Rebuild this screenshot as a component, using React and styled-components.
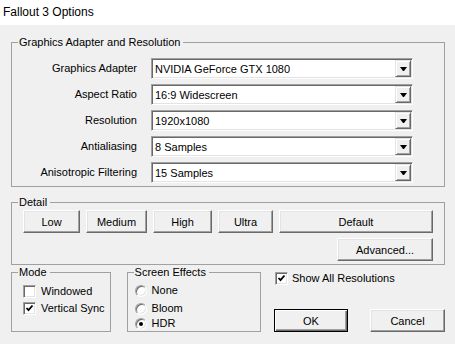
import React from "react";
import styled, { createGlobalStyle, css } from "styled-components";

const Global = createGlobalStyle`
  html, body { margin: 0; padding: 0; background: #f0f0f0; }
  body { font-family: "Liberation Sans", Arial, sans-serif; font-size: 11px; color: #000; }
  * { box-sizing: border-box; }
`;

const Window = styled.div`
  width: 455px;
  height: 344px;
  background: #f0f0f0;
  overflow: hidden;
`;

const TitleBar = styled.div`
  height: 25px;
  background: #fff;
  display: flex;
  align-items: center;
  padding-left: 3px;
  padding-bottom: 1px;
  font-size: 12px;
  color: #000;
`;

const Body = styled.div`
  padding: 17px 10px 0 11px;
`;

const Group = styled.div`
  position: relative;
  border: 1px solid #a0a0a0;
  width: ${(p) => p.$w}px;
  ${(p) => p.$h && css`height: ${p.$h}px;`}
  padding: ${(p) => p.$pad};
`;

const Legend = styled.span`
  position: absolute;
  top: -7px;
  left: 6px;
  padding: 0 3px 0 1px;
  line-height: 13px;
  background: #f0f0f0;
  white-space: nowrap;
`;

const FormGrid = styled.div`
  display: grid;
  grid-template-columns: 125px 262px;
  column-gap: 14px;
  row-gap: 5px;
  align-items: center;
`;

const Label = styled.div`
  text-align: right;
  line-height: 13px;
`;

const Combo = styled.div`
  height: 21px;
  display: flex;
  align-items: stretch;
  background: #fff;
  border: 1px solid;
  border-color: #a0a0a0 #fff #fff #a0a0a0;
  box-shadow: inset 1px 1px #696969, inset -1px -1px #e3e3e3;
  padding: 1px;
`;

const ComboValue = styled.div`
  flex: 1;
  display: flex;
  align-items: center;
  padding-left: 2px;
  white-space: nowrap;
`;

const DropButton = styled.div`
  width: 16px;
  display: flex;
  align-items: center;
  justify-content: center;
  background: #f0f0f0;
  border: 1px solid;
  border-color: #e3e3e3 #696969 #696969 #e3e3e3;
  box-shadow: inset 1px 1px #fff, inset -1px -1px #a0a0a0;
`;

const ButtonRow = styled.div`
  display: flex;
  gap: 6px;
  justify-content: ${(p) => (p.$end ? "flex-end" : "flex-start")};
  margin-top: ${(p) => p.$mt || 0}px;
`;

const Button = styled.button`
  width: ${(p) => p.$w}px;
  height: 23px;
  padding: 0;
  margin: 0;
  font-family: "Liberation Sans", Arial, sans-serif;
  font-size: 11px;
  color: #000;
  background: #f0f0f0;
  border: 1px solid;
  border-color: #fff #696969 #696969 #fff;
  box-shadow: inset -1px -1px #a0a0a0, inset 1px 1px #e3e3e3;
  ${(p) =>
    p.$default &&
    css`
      border-color: #000;
      box-shadow: inset 1px 1px #fff, inset -1px -1px #696969, inset -2px -2px #a0a0a0;
    `}
`;

const BottomRow = styled.div`
  display: flex;
  align-items: flex-start;
  margin-top: 7px;
`;

const OptionList = styled.div`
  display: flex;
  flex-direction: column;
`;

const OptionRow = styled.div`
  display: flex;
  align-items: center;
  height: 13px;
  margin-top: ${(p) => p.$mt || 0}px;
  margin-left: ${(p) => p.$ml || 0}px;
  gap: ${(p) => p.$gap || 5}px;
  white-space: nowrap;
  line-height: 13px;
`;

const CheckBox = styled.div`
  width: 13px;
  height: 13px;
  flex: none;
  display: flex;
  align-items: center;
  justify-content: center;
  background: #fff;
  border: 1px solid;
  border-color: #a0a0a0 #fff #fff #a0a0a0;
  box-shadow: inset 1px 1px #696969, inset -1px -1px #e3e3e3;
`;

const Radio = styled.div`
  width: 12px;
  height: 12px;
  flex: none;
  border-radius: 50%;
  display: flex;
  align-items: center;
  justify-content: center;
  background: #fff;
  border: 1px solid;
  border-color: #a0a0a0 #fff #fff #a0a0a0;
  box-shadow: inset 1px 1px #696969, inset -1px -1px #e3e3e3;
`;

const Dot = styled.div`
  width: 4px;
  height: 4px;
  border-radius: 50%;
  background: #000;
`;

const RightCol = styled.div`
  display: flex;
  flex-direction: column;
  margin-left: 13px;
`;

const Arrow = () => (
  <svg width="7" height="4" viewBox="0 0 7 4">
    <polygon points="0,0 7,0 4,4 3,4" fill="#000" />
  </svg>
);

const Check = () => (
  <svg width="9" height="9" viewBox="0 0 9 9">
    <path d="M1.5 4 L3.5 6.2 L7.5 1.5" stroke="#000" strokeWidth="1.8" fill="none" />
  </svg>
);

const rows = [
  ["Graphics Adapter", "NVIDIA GeForce GTX 1080"],
  ["Aspect Ratio", "16:9 Widescreen"],
  ["Resolution", "1920x1080"],
  ["Antialiasing", "8 Samples"],
  ["Anisotropic Filtering", "15 Samples"],
];

export default function App() {
  return (
    <Window>
      <Global />
      <TitleBar>Fallout 3 Options</TitleBar>
      <Body>
        <Group $w={434} $h={145} $pad="15px 0 3px 0">
          <Legend>Graphics Adapter and Resolution</Legend>
          <FormGrid>
            {rows.map(([label, value]) => (
              <React.Fragment key={label}>
                <Label>{label}</Label>
                <Combo>
                  <ComboValue>{value}</ComboValue>
                  <DropButton>
                    <Arrow />
                  </DropButton>
                </Combo>
              </React.Fragment>
            ))}
          </FormGrid>
        </Group>

        <Group $w={434} $h={63} $pad="7px 11px 3px 11px" style={{ marginTop: 15 }}>
          <Legend>Detail</Legend>
          <ButtonRow>
            <Button $w={57}>Low</Button>
            <Button $w={61}>Medium</Button>
            <Button $w={59}>High</Button>
            <Button $w={55}>Ultra</Button>
            <Button $w={154}>Default</Button>
          </ButtonRow>
          <ButtonRow $end $mt={5}>
            <Button $w={96}>Advanced...</Button>
          </ButtonRow>
        </Group>

        <BottomRow>
          <Group $w={100} $h={60} $pad="12px 0 0 11px">
            <Legend>Mode</Legend>
            <OptionList>
              <OptionRow>
                <CheckBox />
                Windowed
              </OptionRow>
              <OptionRow $mt={4}>
                <CheckBox>
                  <Check />
                </CheckBox>
                Vertical Sync
              </OptionRow>
            </OptionList>
          </Group>

          <Group $w={135} $h={60} $pad="11px 0 0 7px" style={{ marginLeft: 16 }}>
            <Legend>Screen Effects</Legend>
            <OptionList>
              <OptionRow $gap={5}>
                <Radio />
                None
              </OptionRow>
              <OptionRow $mt={5} $gap={5}>
                <Radio />
                Bloom
              </OptionRow>
              <OptionRow $mt={2} $gap={5}>
                <Radio>
                  <Dot />
                </Radio>
                HDR
              </OptionRow>
            </OptionList>
          </Group>

          <RightCol>
            <OptionRow $ml={1} $gap={4}>
              <CheckBox>
                <Check />
              </CheckBox>
              Show All Resolutions
            </OptionRow>
            <ButtonRow $mt={24} style={{ gap: 22 }}>
              <Button $w={74} $default>
                OK
              </Button>
              <Button $w={75}>Cancel</Button>
            </ButtonRow>
          </RightCol>
        </BottomRow>
      </Body>
    </Window>
  );
}
